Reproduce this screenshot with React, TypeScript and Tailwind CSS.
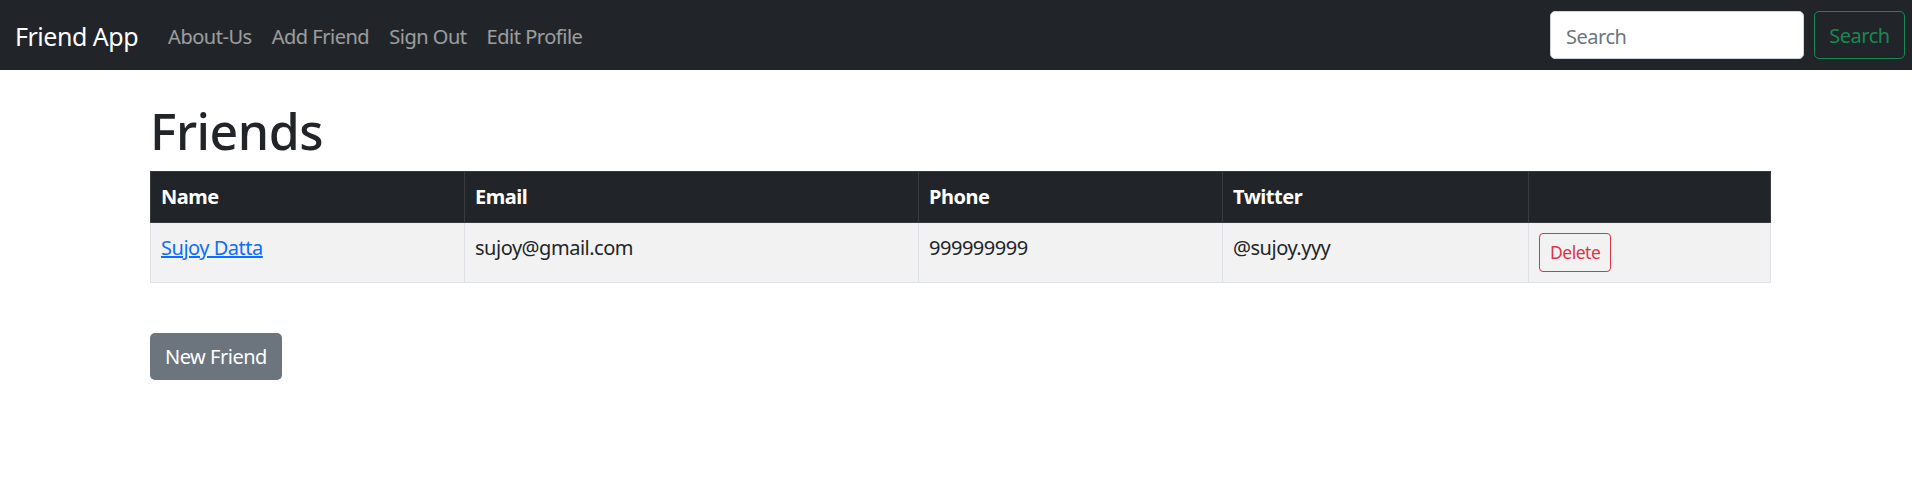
const friends = [
  { id: 1, name: 'Sujoy Datta', email: 'sujoy@gmail.com', phone: '999999999', twitter: '@sujoy.yyy' },
]

const navLinks = ['About-Us', 'Add Friend', 'Sign Out', 'Edit Profile']

const Navbar = () => {
  return (
    <nav className="h-[70px] bg-[#212529] flex items-center pl-[15px] pr-[7px]">
      <a className="text-[25px] text-white mr-[20px] leading-[1.5] mt-[4px]" href="#">
        Friend App
      </a>
      <div className="flex items-center mt-[4px]">
        {navLinks.map((item) => (
          <a key={item} href="#" className="px-[10px] text-[20px] leading-[1.5] text-white/55">
            {item}
          </a>
        ))}
      </div>
      <form className="ml-auto flex items-center" onSubmit={(e) => e.preventDefault()}>
        <input
          className="w-[254px] h-[48px] bg-white rounded-[5px] border border-[#ced4da] px-[15px] pt-[2px] text-[20px] text-[#212529] placeholder:text-[#6c757d] outline-none mr-[10px]"
          placeholder="Search"
        />
        <button className="h-[48px] w-[91px] pt-[2px] rounded-[5px] border border-[#198754] text-[#198754] text-[20px]">
          Search
        </button>
      </form>
    </nav>
  )
}

const App = () => {
  return (
    <div className="min-h-[492px] bg-white text-[#212529] font-['Noto_Sans',sans-serif] tracking-[-0.03em]">
      <Navbar />
      <div className="w-[1620px] ml-[150px]">
        <h1 className="mt-[31px] mb-[10px] text-[50px] leading-[60px] font-medium">Friends</h1>
        <table className="w-[1620px] table-fixed border-collapse text-[20px] leading-[30px]">
          <thead>
            <tr className="bg-[#212529] text-white">
              <th className="w-[314px] text-left font-bold px-[10px] py-[10px] border border-[#373b3e]">Name</th>
              <th className="w-[454px] text-left font-bold px-[10px] py-[10px] border border-[#373b3e]">Email</th>
              <th className="w-[304px] text-left font-bold px-[10px] py-[10px] border border-[#373b3e]">Phone</th>
              <th className="w-[306px] text-left font-bold px-[10px] py-[10px] border border-[#373b3e]">Twitter</th>
              <th className="w-[242px] px-[10px] py-[10px] border border-[#373b3e]"></th>
            </tr>
          </thead>
          <tbody>
            {friends.map((f) => (
              <tr key={f.id} className="bg-[#f2f2f2]">
                <td className="align-top px-[10px] py-[10px] border border-[#dee2e6]">
                  <a href="#" className="text-[#0d6efd] underline">
                    {f.name}
                  </a>
                </td>
                <td className="align-top px-[10px] py-[10px] border border-[#dee2e6]">{f.email}</td>
                <td className="align-top px-[10px] py-[10px] border border-[#dee2e6]">{f.phone}</td>
                <td className="align-top px-[10px] py-[10px] border border-[#dee2e6]">{f.twitter}</td>
                <td className="align-top px-[10px] py-[10px] border border-[#dee2e6]">
                  <button className="h-[39px] px-[10px] rounded-[4px] border border-[#dc3545] text-[#dc3545] text-[17.5px] leading-[1.5]">
                    Delete
                  </button>
                </td>
              </tr>
            ))}
          </tbody>
        </table>
        <button className="mt-[50px] h-[47px] px-[15px] rounded-[5px] bg-[#6c757d] text-white text-[20px] leading-[30px]">
          New Friend
        </button>
      </div>
    </div>
  )
}
export default App
